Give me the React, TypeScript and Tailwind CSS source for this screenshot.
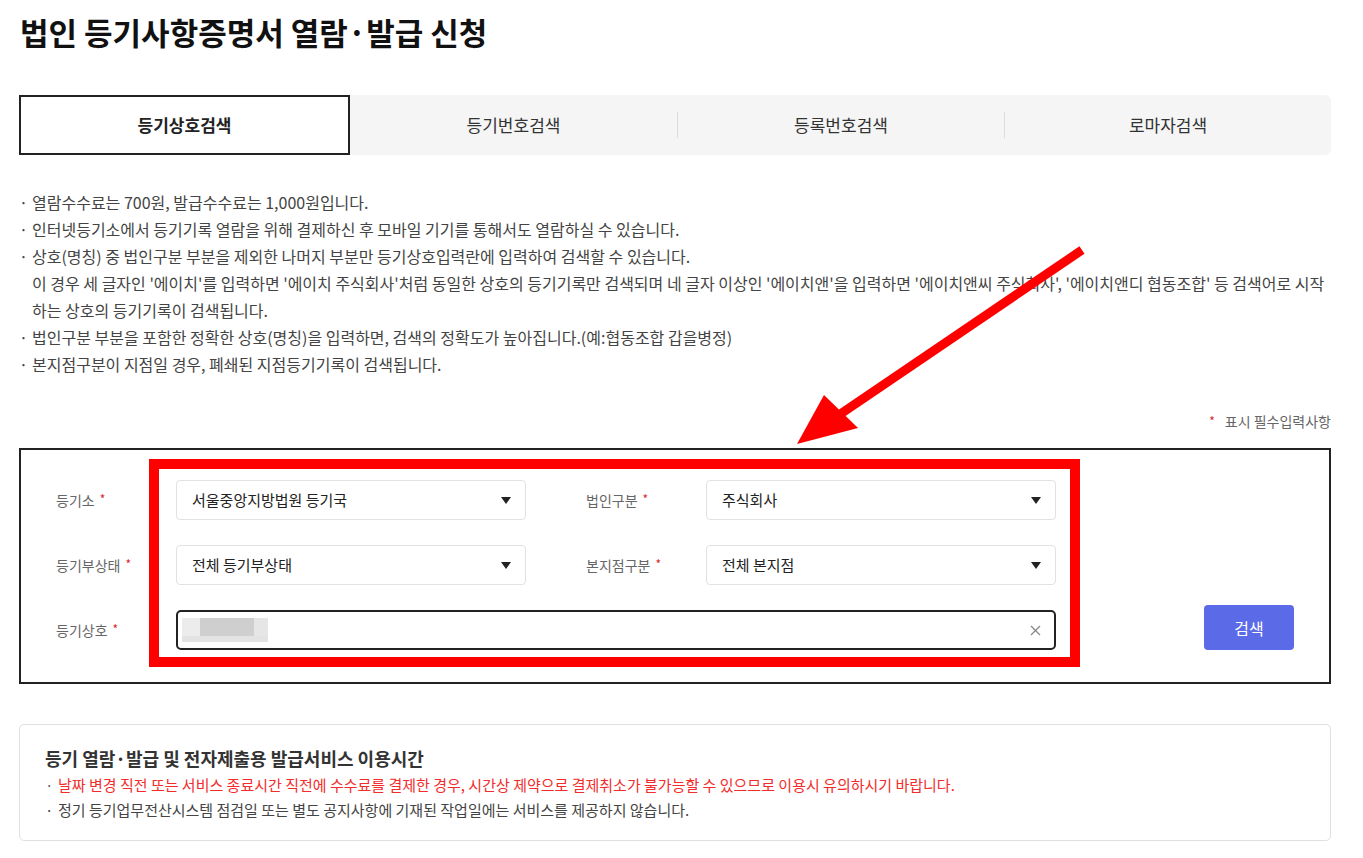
import React from "react";

const tabs = ["등기상호검색", "등기번호검색", "등록번호검색", "로마자검색"];

const notices: string[][] = [
  ["열람수수료는 700원, 발급수수료는 1,000원입니다."],
  ["인터넷등기소에서 등기기록 열람을 위해 결제하신 후 모바일 기기를 통해서도 열람하실 수 있습니다."],
  [
    "상호(명칭) 중 법인구분 부분을 제외한 나머지 부분만 등기상호입력란에 입력하여 검색할 수 있습니다.",
    "이 경우 세 글자인 '에이치'를 입력하면 '에이치 주식회사'처럼 동일한 상호의 등기기록만 검색되며 네 글자 이상인 '에이치앤'을 입력하면 '에이치앤씨 주식회사', '에이치앤디 협동조합' 등 검색어로 시작",
    "하는 상호의 등기기록이 검색됩니다.",
  ],
  ["법인구분 부분을 포함한 정확한 상호(명칭)을 입력하면, 검색의 정확도가 높아집니다.(예:협동조합 갑을병정)"],
  ["본지점구분이 지점일 경우, 폐쇄된 지점등기기록이 검색됩니다."],
];

function Caret() {
  return (
    <svg width="10" height="7" viewBox="0 0 10 7" className="shrink-0">
      <polygon points="0,0 10,0 5,7" fill="#222" />
    </svg>
  );
}

function Label({ text }: { text: string }) {
  return (
    <div className="flex w-[120px] shrink-0 items-center text-[14px] text-[#666]">
      {text}
      <span className="ml-[5px] -mt-[3px] text-[12px] text-[#d9262c]">*</span>
    </div>
  );
}

function Select({ value }: { value: string }) {
  return (
    <div className="flex h-10 w-[350px] shrink-0 items-center justify-between rounded-[4px] border border-[#e2e2e2] bg-white pl-[15px] pr-[14px] text-[15px] text-[#222]">
      <span>{value}</span>
      <Caret />
    </div>
  );
}

export default function App() {
  return (
    <div className="relative min-h-[858px] w-[1363px] bg-white font-['Noto_Sans_CJK_KR',sans-serif] text-[#333]">
      <div className="pl-[19px] pr-[32px] pb-[18px]">
        <h1 className="pt-[12px] pl-px text-[31px] leading-[40px] font-bold text-[#111]">
          법인 등기사항증명서 열람·발급 신청
        </h1>

        {/* tabs */}
        <div className="mt-[43px] flex h-[60px] rounded-r-[6px] bg-[#f5f5f5]">
          {tabs.map((t, i) =>
            i === 0 ? (
              <div
                key={t}
                className="flex w-[331px] items-center justify-center border-2 border-[#222] bg-white text-[17px] font-bold text-[#222]"
              >
                {t}
              </div>
            ) : (
              <div key={t} className="flex flex-1 items-center">
                {i > 1 && <div className="h-[26px] w-px bg-[#dcdcdc]" />}
                <div className="flex flex-1 items-center justify-center text-[17px] text-[#333]">
                  {t}
                </div>
              </div>
            )
          )}
        </div>

        {/* notices */}
        <ul className="mt-[34px] text-[16px] leading-[27px] text-[#444]">
          {notices.map((lines) => (
            <li key={lines[0]} className="relative pl-[13px]">
              <span className="absolute left-0 top-0">·</span>
              {lines.map((l) => (
                <div key={l} className="whitespace-nowrap">
                  {l}
                </div>
              ))}
            </li>
          ))}
        </ul>

        <div className="mt-[33px] flex items-center justify-end text-[14px] text-[#666]">
          <span className="mr-[10px] -mt-[2px] text-[12px] text-[#d9262c]">*</span>
          표시 필수입력사항
        </div>

        {/* form */}
        <div className="relative mt-[16px] flex items-end border-2 border-[#222] pt-[30px] pb-[32px] pl-[35px]">
          <div className="flex flex-col gap-[25px]">
            <div className="flex">
              <Label text="등기소" />
              <Select value="서울중앙지방법원 등기국" />
              <div className="ml-[60px] flex">
                <Label text="법인구분" />
                <Select value="주식회사" />
              </div>
            </div>
            <div className="flex">
              <Label text="등기부상태" />
              <Select value="전체 등기부상태" />
              <div className="ml-[60px] flex">
                <Label text="본지점구분" />
                <Select value="전체 본지점" />
              </div>
            </div>
            <div className="flex">
              <Label text="등기상호" />
              <div className="flex h-10 w-[880px] items-center justify-between rounded-[5px] border-2 border-[#222] pl-[4px] pr-[13px]">
                <div className="flex h-[24px] w-[86px] flex-col">
                  <div className="flex h-[18px]">
                    <div className="w-[18px] bg-[#ececec]" />
                    <div className="w-[54px] bg-[#cfcfcf]" />
                    <div className="w-[14px] bg-[#e6e6e6]" />
                  </div>
                  <div className="h-[6px] bg-[#e3e3e3]" />
                </div>
                <svg width="11" height="11" viewBox="0 0 11 11">
                  <path d="M1 1L10 10M10 1L1 10" stroke="#888" strokeWidth="1.3" />
                </svg>
              </div>
            </div>
          </div>
          <button className="ml-[148px] h-[45px] w-[90px] rounded-[4px] bg-[#5b6be8] text-[16px] text-white">
            검색
          </button>

          {/* red highlight annotation */}
          <div className="pointer-events-none absolute top-[9px] left-[128px] h-[208px] w-[931px] border-[10px] border-[#ff0000]" />
        </div>

        {/* usage hours */}
        <div className="mt-[40px] rounded-[5px] border border-[#e0e0e0] px-[25px] pt-[20px] pb-[18px]">
          <h2 className="text-[18px] leading-[26px] font-bold text-[#333]">
            등기 열람·발급 및 전자제출용 발급서비스 이용시간
          </h2>
          <ul className="mt-[1px] text-[15px] leading-[25px]">
            <li className="relative pl-[13px] text-[#f22c2c]">
              <span className="absolute left-0 top-0 text-[#666]">·</span>
              날짜 변경 직전 또는 서비스 종료시간 직전에 수수료를 결제한 경우, 시간상 제약으로 결제취소가 불가능할 수 있으므로 이용시 유의하시기 바랍니다.
            </li>
            <li className="relative pl-[13px] text-[#444]">
              <span className="absolute left-0 top-0">·</span>
              정기 등기업무전산시스템 점검일 또는 별도 공지사항에 기재된 작업일에는 서비스를 제공하지 않습니다.
            </li>
          </ul>
        </div>
      </div>

      {/* red arrow annotation */}
      <svg
        className="pointer-events-none absolute top-0 left-0"
        width="1363"
        height="858"
        viewBox="0 0 1363 858"
      >
        <line x1="1082" y1="250" x2="836" y2="417" stroke="#ff0000" strokeWidth="9" />
        <polygon points="797,444 824,395 858,428" fill="#ff0000" />
      </svg>
    </div>
  );
}
